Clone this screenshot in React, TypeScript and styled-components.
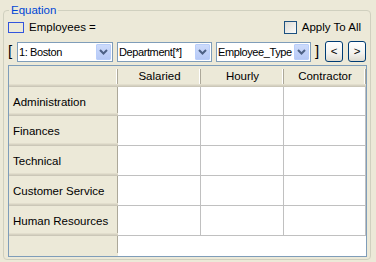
import React from 'react';
import styled, { createGlobalStyle } from 'styled-components';

const GlobalStyle = createGlobalStyle`
  html, body {
    margin: 0;
    padding: 0;
    background: #ece9d8;
  }

  body {
    width: 376px;
    height: 262px;
    overflow: hidden;
    font-family: 'Liberation Sans', Arial, sans-serif;
    font-size: 11.5px;
    color: #000;
  }
`;

const Group = styled.fieldset`
  box-sizing: border-box;
  width: 368px;
  height: 256px;
  margin: 4px 0 0 3px;
  padding: 0 3px 0 4px;
  border: 1px solid #d0d0bf;
  border-radius: 4px;
`;

const Legend = styled.legend`
  margin-left: 1px;
  padding: 0 2px;
  line-height: 13px;
  color: #0046d5;
`;

const TopRow = styled.div`
  display: flex;
  justify-content: space-between;
  align-items: center;
  height: 14px;
  margin-top: 3px;
  padding-right: 6px;
`;

const Inline = styled.div`
  display: flex;
  align-items: center;
  gap: 5px;
  line-height: 13px;
`;

const VarBox = styled.span`
  box-sizing: border-box;
  width: 16px;
  height: 11px;
  border: 1px solid #3355dd;
`;

const Check = styled.span`
  box-sizing: border-box;
  width: 13px;
  height: 13px;
  border: 1px solid #1c5180;
  background: linear-gradient(135deg, #dcdbd5, #fbfbf9);
`;

const PickRow = styled.div`
  display: flex;
  align-items: flex-start;
  height: 21px;
  margin-top: 7px;
`;

const Bracket = styled.span<{ $width: number; $pad: number }>`
  width: ${(p) => p.$width}px;
  padding-left: ${(p) => p.$pad}px;
  box-sizing: border-box;
  font-size: 15px;
  line-height: 19px;
  font-weight: 300;
`;

const Combo = styled.div<{ $width: number; $gap: number }>`
  box-sizing: border-box;
  display: flex;
  align-items: center;
  width: ${(p) => p.$width}px;
  height: 20px;
  margin: 1px 0 0 ${(p) => p.$gap}px;
  border: 1px solid #7f9db9;
  background: #fff;
`;

const ComboText = styled.span`
  flex: 1;
  overflow: hidden;
  white-space: nowrap;
  padding-left: 1px;
  font-size: 11px;
  letter-spacing: -0.4px;
`;

const ComboArrow = styled.span`
  box-sizing: border-box;
  display: flex;
  align-items: center;
  justify-content: center;
  flex: none;
  width: 15px;
  height: 16px;
  margin-right: 1px;
  border: 1px solid #b9cefa;
  border-radius: 1px;
  background: linear-gradient(#cddbfb, #b6c9f6);
`;

const StepButton = styled.button<{ $gap: number }>`
  box-sizing: border-box;
  width: 18px;
  height: 21px;
  margin-left: ${(p) => p.$gap}px;
  padding: 0;
  border: 1px solid #003c74;
  border-radius: 3px;
  background: linear-gradient(#ffffff 0%, #f3f2ee 60%, #dedbd0 100%);
  font-family: inherit;
  font-size: 11.5px;
  line-height: 19px;
  color: #000;
`;

const Grid = styled.div`
  box-sizing: border-box;
  display: grid;
  grid-template-columns: 109px 83px 83px 82px;
  grid-template-rows: 21px 29px repeat(4, 30px) 20px;
  width: 359px;
  margin-top: 3px;
  border: 1px solid #7f9db9;
  background: #fff;
`;

const HeadCell = styled.div`
  display: flex;
  align-items: center;
  justify-content: center;
  padding-bottom: 1px;
  background:
    linear-gradient(#aca899, #aca899) right 0 top 3px / 1px 15px no-repeat,
    linear-gradient(#fff, #fff) right 1px top 3px / 1px 15px no-repeat,
    #ece9d8;
  box-shadow:
    inset 0 -1px #cbc7b8,
    inset 0 -2px #d6d2c2,
    inset 0 -3px #e2decd;
`;

const RowHead = styled.div<{ $last?: boolean }>`
  display: flex;
  align-items: center;
  padding-left: 4px;
  background:
    linear-gradient(#aca899, #aca899) right 0 top 0 / 1px calc(100% - 3px) no-repeat,
    #ece9d8;
  box-shadow: ${(p) =>
    p.$last
      ? 'none'
      : 'inset 0 -1px #cbc7b8, inset 0 -2px #d6d2c2, inset 0 -3px #e2decd'};
`;

const DataCell = styled.div`
  border-right: 1px solid #c0c0c0;
  border-bottom: 1px solid #c0c0c0;
`;

const Filler = styled.div`
  grid-column: span 3;
`;

const Chevron = () => (
  <svg width="9" height="6" viewBox="0 0 9 6">
    <path d="M1 1 L4.5 4.5 L8 1" fill="none" stroke="#4d6185" strokeWidth="2" />
  </svg>
);

const columns = ['Salaried', 'Hourly', 'Contractor'];
const rows = ['Administration', 'Finances', 'Technical', 'Customer Service', 'Human Resources'];

const App: React.FC = () => (
  <>
    <GlobalStyle />
    <Group>
      <Legend>Equation</Legend>
      <TopRow>
        <Inline>
          <VarBox />
          <span>Employees =</span>
        </Inline>
        <Inline>
          <Check />
          <span>Apply To All</span>
        </Inline>
      </TopRow>
      <PickRow>
        <Bracket $width={9} $pad={0}>[</Bracket>
        <Combo $width={96} $gap={0}>
          <ComboText>1: Boston</ComboText>
          <ComboArrow>
            <Chevron />
          </ComboArrow>
        </Combo>
        <Combo $width={95} $gap={4}>
          <ComboText>Department[*]</ComboText>
          <ComboArrow>
            <Chevron />
          </ComboArrow>
        </Combo>
        <Combo $width={95} $gap={4}>
          <ComboText>Employee_Type</ComboText>
          <ComboArrow>
            <Chevron />
          </ComboArrow>
        </Combo>
        <Bracket $width={14} $pad={4}>]</Bracket>
        <StepButton $gap={0}>&lt;</StepButton>
        <StepButton $gap={5}>&gt;</StepButton>
      </PickRow>
      <Grid>
        <HeadCell />
        {columns.map((c) => (
          <HeadCell key={c}>{c}</HeadCell>
        ))}
        {rows.map((r) => (
          <React.Fragment key={r}>
            <RowHead>{r}</RowHead>
            {columns.map((c) => (
              <DataCell key={c} />
            ))}
          </React.Fragment>
        ))}
        <RowHead $last />
        <Filler />
      </Grid>
    </Group>
  </>
);

export default App;
